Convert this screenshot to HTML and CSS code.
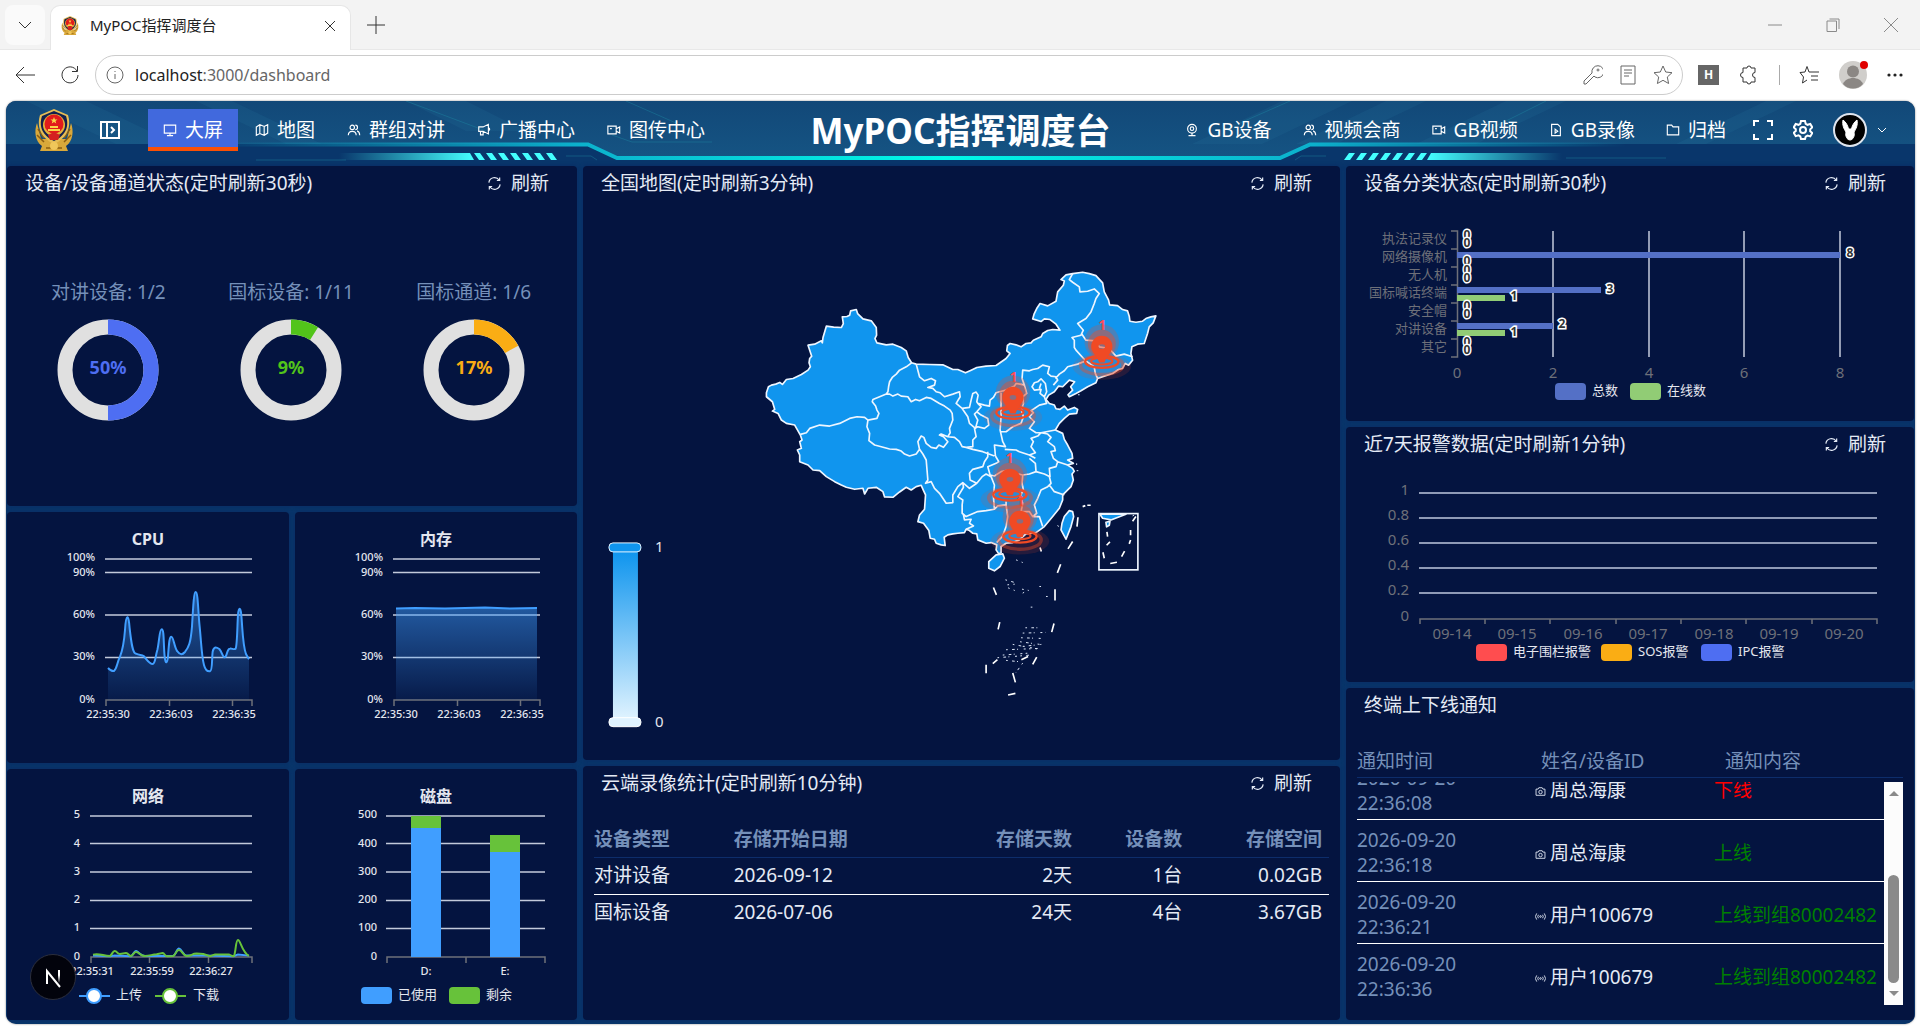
FILE: index.html
```html
<!DOCTYPE html>
<html lang="zh-CN">
<head>
<meta charset="utf-8">
<title>MyPOC指挥调度台</title>
<link rel="stylesheet" href="styles.css">
</head>
<body>
<svg class="defs" width="0" height="0" aria-hidden="true">
  <defs>
    <symbol id="emblem" viewBox="0 0 40 44">
      <path d="M3 14C0 22 1 32 8 37L6 42H34L32 37C39 32 40 22 37 14L33 30H7Z" fill="#d9a83a"/>
      <path d="M4 20l6 9M3 26l7 7M36 20l-6 9M37 26l-7 7M12 39h16" stroke="#8a5d12" stroke-width="1.5" fill="none"/>
      <path d="M20 0L34 6C37 16 35 28 20 35C5 28 3 16 6 6Z" fill="#e6bd55"/>
      <path d="M20 2L32 7C35 16 33 26 20 32C7 26 5 16 8 7Z" fill="#12204d"/>
      <circle cx="20" cy="16" r="11" fill="#e3b23c"/><circle cx="20" cy="15" r="9.500" fill="#e21b1b"/>
      <path d="M20 8l1 2.500h2.500l-2 1.500.8 2.500-2.300-1.500-2.300 1.500.8-2.500-2-1.500H19zM14 20h12v2H14zM16 17h8v2h-8z" fill="#f8d648"/>
      <path d="M14 26l6-3 6 3-2 5h-8z" fill="#d42020"/>
      <circle cx="20" cy="37" r="4" fill="#f0c75a"/>
    </symbol>
    <symbol id="i-sync" viewBox="0 0 16 16"><path d="M2 7a6 6 0 0 1 11-2.500M14 9a6 6 0 0 1-11 2.500M13.500 1.500v3.300h-3M2.500 14.500v-3.300h3"/></symbol>
    <symbol id="i-screen" viewBox="0 0 16 16"><path d="M1.500 2.500h13v9h-13zM8 11.500v3M4.500 14.500h7"/></symbol>
    <symbol id="i-map" viewBox="0 0 16 16"><path d="M1.500 4.500l4-2.500 5 2 4-2v9.500l-4 2.500-5-2-4 2zM5.500 2v10M10.500 4v10"/></symbol>
    <symbol id="i-team" viewBox="0 0 16 16"><circle cx="6" cy="5" r="2.500"/><path d="M1.500 14c0-6 9-6 9 0M9.500 2.500a2.500 2.500 0 0 1 0 5M11.500 9c2 .7 3 2.500 3 5"/></symbol>
    <symbol id="i-horn" viewBox="0 0 16 16"><path d="M2 4.500h5l6-3v11l-6-3H2zM4 9.500v4h3v-4M13 5.500c2 .5 2 2.500 0 3"/></symbol>
    <symbol id="i-video" viewBox="0 0 16 16"><path d="M1 3.500h9.500v9H1zM10.500 6.500l4-2v7l-4-2M3.500 6.500h2"/></symbol>
    <symbol id="i-webcam" viewBox="0 0 16 16"><circle cx="8" cy="6.500" r="5"/><circle cx="8" cy="6.500" r="2"/><path d="M8 11.500v3M4 14.500h8"/></symbol>
    <symbol id="i-file" viewBox="0 0 16 16"><path d="M3 1.500h7l3 3v10H3zM7 7v4.500l3-2.200z"/></symbol>
    <symbol id="i-folder" viewBox="0 0 16 16"><path d="M1.500 2.500h5l1.500 2h6.500v9h-13z"/></symbol>
    <symbol id="i-camera" viewBox="0 0 16 16"><path d="M1.500 4.500h3l1-2h5l1 2h3v9h-13z"/><circle cx="8" cy="8.800" r="2.500"/></symbol>
    <symbol id="i-signal" viewBox="0 0 16 16"><circle cx="8" cy="8" r="1.200"/><path d="M5 5.500a4 4 0 0 0 0 5M11 5.500a4 4 0 0 1 0 5M2.500 3.500a7 7 0 0 0 0 9M13.500 3.500a7 7 0 0 1 0 9"/></symbol>
    <linearGradient id="area" x1="0" y1="0" x2="0" y2="1"><stop offset="0" stop-color="#409eff" stop-opacity=".5"/><stop offset="1" stop-color="#409eff" stop-opacity=".05"/></linearGradient>
    <linearGradient id="heat" x1="0" y1="0" x2="0" y2="1"><stop offset="0" stop-color="#0f95ee"/><stop offset="1" stop-color="#e0f3ff"/></linearGradient>
    <symbol id="pin" viewBox="-100 -100 200 210" overflow="visible">
      <ellipse cx="0" cy="60" rx="88" ry="40" fill="#f04a24" opacity=".14"/>
      <ellipse cx="0" cy="56" rx="64" ry="28" fill="none" stroke="#f04a24" stroke-width="10" opacity=".4"/>
      <circle cx="0" cy="-14" r="52" fill="#f04a24" opacity=".25"/>
      <circle cx="0" cy="-8" r="42" fill="#f04a24" opacity=".4"/>
      <ellipse cx="0" cy="46" rx="50" ry="18" fill="none" stroke="#f04a24" stroke-width="7"/>
      <ellipse cx="0" cy="44" rx="32" ry="10" fill="none" stroke="#f04a24" stroke-width="6"/>
      <path fill-rule="evenodd" fill="#f04a24" d="M-32 0A32 32 0 0 1 32 0C32 18 14 28 8 48H-8C-14 28-32 18-32 0ZM-10 0A10 7 0 1 0 10 0A10 7 0 1 0-10 0Z"/>
    </symbol>
  </defs>
</svg>

<div class="browser">
  <div class="tabstrip">
    <button class="tab-search" aria-label="标签页"><svg width="16" height="16" viewBox="0 0 16 16"><path d="M2 5l6 6 6-6"/></svg></button>
    <div class="tab">
      <svg class="favicon" width="18" height="20"><use href="#emblem"/></svg>
      <span class="tab-title">MyPOC指挥调度台</span>
      <button aria-label="关闭"><svg width="12" height="12" viewBox="0 0 12 12"><path d="M1 1l10 10M11 1L1 11"/></svg></button>
    </div>
    <button class="new-tab" aria-label="新建标签页"><svg width="18" height="18" viewBox="0 0 18 18"><path d="M9 0v18M0 9h18"/></svg></button>
    <div class="window-controls">
      <button aria-label="最小化"><svg width="14" height="14" viewBox="0 0 14 14"><path d="M0 7h14"/></svg></button>
      <button aria-label="还原"><svg width="14" height="14" viewBox="0 0 14 14"><path d="M1 3h9.500v10.500H1zM3.500 1H13v10"/></svg></button>
      <button aria-label="关闭窗口"><svg width="14" height="14" viewBox="0 0 14 14"><path d="M0 0l14 14M14 0L0 14"/></svg></button>
    </div>
  </div>
  <div class="toolbar">
    <button aria-label="返回"><svg width="20" height="18" viewBox="0 0 20 18"><path d="M20 9H1M9 1L1 9l8 8"/></svg></button>
    <button aria-label="刷新页面"><svg width="20" height="20" viewBox="0 0 20 20"><path d="M17 6a8 8 0 1 0 1 4M17.500 1v5.500H12"/></svg></button>
    <div class="address">
      <svg width="18" height="18" viewBox="0 0 18 18"><circle cx="9" cy="9" r="8"/><path d="M9 8v5M9 5v1"/></svg>
      <a href="#" class="url">localhost<span>:3000/dashboard</span></a>
      <svg width="20" height="20" viewBox="0 0 20 20"><path d="M11 11l-8 8H1v-3l8-8a6 6 0 1 1 3 4z"/><circle cx="15" cy="5" r="1"/></svg>
      <svg width="16" height="20" viewBox="0 0 16 20"><path d="M1 1h14v18H1zM4 5h8M4 8h8M4 11h5"/></svg>
      <svg width="20" height="20" viewBox="0 0 20 20"><path d="M10 1l2.700 6 6.300.7-4.700 4.300 1.300 6.500L10 15.300 4.400 18.500 5.700 12 1 7.700 7.300 7z"/></svg>
    </div>
    <div class="extensions">
      <span class="ext-h">H</span>
      <svg width="20" height="20" viewBox="0 0 20 20"><path d="M4 3h4a2 2 0 0 1 4 0h4v4.500a2.200 2.200 0 0 0 0 5V17h-4a2 2 0 0 1-4 0H4v-4.500a2.500 2.500 0 0 1 0-5z"/></svg>
      <i class="divider"></i>
      <svg width="20" height="20" viewBox="0 0 20 20"><path d="M12 7H10L8 1.500 6 7 1 7.500 4.500 12 3.500 18 8 15M12 7h8M12 11h7M12 15h7"/></svg>
      <span class="profile"><svg width="28" height="28" viewBox="0 0 28 28"><circle cx="14" cy="14" r="14" fill="#d0cecb" stroke="none"/><circle cx="14" cy="10.500" r="6" fill="#8b8784" stroke="none"/><path d="M4 23c3-8 17-8 20 0-5 6-15 6-20 0z" fill="#8b8784" stroke="none"/></svg></span>
      <svg class="dots" width="16" height="4" viewBox="0 0 16 4"><circle cx="2" cy="2" r="1.600"/><circle cx="8" cy="2" r="1.600"/><circle cx="14" cy="2" r="1.600"/></svg>
    </div>
  </div>
</div>

<div class="app">
  <header class="header">
    <svg class="header-bg" viewBox="0 0 1909 65" preserveAspectRatio="none" aria-hidden="true">
      <defs>
        <linearGradient id="sky" x1="0" y1="0" x2="0" y2="1"><stop offset="0" stop-color="#124878"/><stop offset="1" stop-color="#155483"/></linearGradient>
        <linearGradient id="edge" gradientUnits="userSpaceOnUse" x1="200" y1="0" x2="1620" y2="0"><stop offset="0" stop-color="#0cb0cc" stop-opacity="0"/><stop offset=".26" stop-color="#0cb0cc"/><stop offset=".52" stop-color="#00fae8"/><stop offset=".78" stop-color="#0cb0cc"/><stop offset="1" stop-color="#0cb0cc" stop-opacity="0"/></linearGradient>
        <linearGradient id="tailL"><stop offset="0" stop-color="#4ff" stop-opacity="0"/><stop offset="1" stop-color="#4ff"/></linearGradient>
        <linearGradient id="tailR"><stop offset="0" stop-color="#4ff"/><stop offset="1" stop-color="#4ff" stop-opacity="0"/></linearGradient>
      </defs>
      <path fill="url(#sky)" d="M0 0H1909V43H1304L1274 57H611L582 43H0Z"/>
      <path fill="#2f86a8" opacity=".13" d="M20 0h60l90 43h-60zM190 0h36l90 43h-36zM400 0h60l60 30h-60zM1276 0h70l-90 43h-70zM1380 0h40l-90 43h-40zM1500 0h60l-90 43h-60zM1760 0h30l-90 43h-30z"/>
      <path fill="none" stroke="#1e8ba5" opacity=".4" d="M400 0l80 30M620 0l50 22M606 34l20 7h80M1284 0l-50 22M1540 0l-60 30M250 59h90M560 55h25l6 4M1320 55h-25l-6 4M1560 57h100"/>
      <path fill="none" stroke="url(#edge)" stroke-width="4" d="M200 43.500H582L611 57H1274L1304 43.500H1620"/>
      <path fill="url(#tailL)" d="M333 52H464L468 59H333Z"/>
      <path fill="url(#tailR)" d="M1425 52H1556V59H1421Z"/>
      <path fill="#4ff" d="M468 52h6l5 7h-6zM480 52h6l5 7h-6zM492 52h6l5 7h-6zM504 52h6l5 7h-6zM516 52h6l5 7h-6zM528 52h6l5 7h-6zM540 52h6l5 7h-6zM1343 52h6l-5 7h-6zM1355 52h6l-5 7h-6zM1367 52h6l-5 7h-6zM1379 52h6l-5 7h-6zM1391 52h6l-5 7h-6zM1403 52h6l-5 7h-6zM1415 52h6l-5 7h-6z"/>
    </svg>
    <div class="header-side">
      <svg class="logo" width="40" height="44"><use href="#emblem"/></svg>
      <button class="icon-btn" aria-label="展开侧栏"><svg width="20" height="20" viewBox="0 0 20 20"><path d="M1 2h18v16H1zM7 2v16M11 7l3 3-3 3"/></svg></button>
      <nav class="nav">
        <a href="#" class="active"><svg><use href="#i-screen"/></svg>大屏</a>
        <a href="#"><svg><use href="#i-map"/></svg>地图</a>
        <a href="#"><svg><use href="#i-team"/></svg>群组对讲</a>
        <a href="#"><svg><use href="#i-horn"/></svg>广播中心</a>
        <a href="#"><svg><use href="#i-video"/></svg>图传中心</a>
      </nav>
    </div>
    <h1>MyPOC指挥调度台</h1>
    <div class="header-side header-right">
      <nav class="nav">
        <a href="#"><svg><use href="#i-webcam"/></svg>GB设备</a>
        <a href="#"><svg><use href="#i-team"/></svg>视频会商</a>
        <a href="#"><svg><use href="#i-video"/></svg>GB视频</a>
        <a href="#"><svg><use href="#i-file"/></svg>GB录像</a>
        <a href="#"><svg><use href="#i-folder"/></svg>归档</a>
      </nav>
      <button class="icon-btn" aria-label="全屏"><svg width="20" height="20" viewBox="0 0 20 20"><path d="M1 6V1h5M14 1h5v5M19 14v5h-5M6 19H1v-5"/></svg></button>
      <button class="icon-btn" aria-label="设置"><svg width="20" height="20" viewBox="0 0 20 20"><path d="M8 1h4l.7 2.800 1.800 1L17.300 4l2 3.400L17.200 9.400v1.800l2.100 1.800-2 3.400-2.800-.8-1.800 1L12 19H8l-.7-2.600-1.800-1-2.800.8-2-3.400 2.100-1.800V9.200L.7 7.400l2-3.400 2.800.8 1.800-1z"/><circle cx="10" cy="10" r="3"/></svg></button>
      <button class="user" aria-label="用户菜单"><svg width="34" height="34" viewBox="0 0 34 34"><circle cx="17" cy="17" r="16" fill="#000" stroke="#dfe5ee" stroke-width="2"/><path d="M10 7c3 2 5 6 5.500 9h3C19 13 21 9 24 7c1 5-1 9-3 12 1 4-1 8-4 8s-5-4-4-8c-2-3-4-7-3-12z" fill="#fff"/></svg><svg class="caret" width="10" height="8" viewBox="0 0 10 8"><path d="M1 2l4 4 4-4"/></svg></button>
    </div>
  </header>

  <main class="dashboard">
    <div class="column column-left">
      <section class="panel">
        <div class="panel-head"><h2>设备/设备通道状态(定时刷新30秒)</h2><button class="refresh"><svg><use href="#i-sync"/></svg>刷新</button></div>
        <div class="gauges">
          <figure><figcaption>对讲设备: 1/2</figcaption>
            <svg width="102" height="102" viewBox="-51 -51 102 102"><circle r="43" fill="none" stroke="#e0e0e0" stroke-width="15"/><circle r="43" fill="none" stroke="#4e6ef2" stroke-width="15" pathLength="100" stroke-dasharray="50 100" transform="rotate(-90)"/><text y="4" fill="#4e6ef2">50%</text></svg></figure>
          <figure><figcaption>国标设备: 1/11</figcaption>
            <svg width="102" height="102" viewBox="-51 -51 102 102"><circle r="43" fill="none" stroke="#e0e0e0" stroke-width="15"/><circle r="43" fill="none" stroke="#52c41a" stroke-width="15" pathLength="100" stroke-dasharray="9 100" transform="rotate(-90)"/><text y="4" fill="#52c41a">9%</text></svg></figure>
          <figure><figcaption>国标通道: 1/6</figcaption>
            <svg width="102" height="102" viewBox="-51 -51 102 102"><circle r="43" fill="none" stroke="#e0e0e0" stroke-width="15"/><circle r="43" fill="none" stroke="#faad14" stroke-width="15" pathLength="100" stroke-dasharray="17 100" transform="rotate(-90)"/><text y="4" fill="#faad14">17%</text></svg></figure>
        </div>
      </section>
      <div class="monitors">
        <section class="panel">
          <svg class="chart" viewBox="0 0 282 251">
            <text class="title" x="141" y="33">CPU</text>
            <path class="grid" d="M98 47H245M98 60.500H245M98 103H245M98 145.500H245"/>
            <path class="axis" d="M99 194V188H245V194M162.500 188V194M225.500 188V194"/>
            <g class="ylab"><text x="88" y="49">100%</text><text x="88" y="64">90%</text><text x="88" y="106">60%</text><text x="88" y="148">30%</text><text x="88" y="191">0%</text></g>
            <g class="xlab"><text x="101" y="206">22:35:30</text><text x="164" y="206">22:36:03</text><text x="227" y="206">22:36:35</text></g>
            <g transform="translate(-7 -2) scale(.3333)">
              <path fill="url(#area)" d="M324 474C330 480 335 485 342 483C352 475 350 460 360 440C366 425 372 400 375 360C378 310 386 310 389 355C394 400 398 430 408 431C418 436 425 434 431 438C440 448 448 462 458 462C466 462 466 440 472 420C478 395 478 358 485 358C493 358 490 400 494 440C497 465 502 460 504 440C507 400 508 380 514 380C521 380 522 410 532 424C540 436 548 434 555 426C566 412 572 400 576 350C580 280 582 246 587 246C594 246 594 300 599 350C604 400 605 440 612 465C616 480 622 485 630 484C638 482 635 450 638 425C642 408 650 412 658 417C666 425 668 442 674 442C682 440 680 416 690 416C696 415 702 420 707 416C712 405 712 340 714 315C716 290 722 290 724 315C728 360 728 405 738 432L747 448V570H324Z"/>
              <path class="curve" d="M324 474C330 480 335 485 342 483C352 475 350 460 360 440C366 425 372 400 375 360C378 310 386 310 389 355C394 400 398 430 408 431C418 436 425 434 431 438C440 448 448 462 458 462C466 462 466 440 472 420C478 395 478 358 485 358C493 358 490 400 494 440C497 465 502 460 504 440C507 400 508 380 514 380C521 380 522 410 532 424C540 436 548 434 555 426C566 412 572 400 576 350C580 280 582 246 587 246C594 246 594 300 599 350C604 400 605 440 612 465C616 480 622 485 630 484C638 482 635 450 638 425C642 408 650 412 658 417C666 425 668 442 674 442C682 440 680 416 690 416C696 415 702 420 707 416C712 405 712 340 714 315C716 290 722 290 724 315C728 360 728 405 738 432L747 448"/>
            </g>
          </svg>
        </section>
        <section class="panel">
          <svg class="chart" viewBox="0 0 282 251">
            <text class="title" x="141" y="33">内存</text>
            <path class="grid" d="M98 47H245M98 60.500H245M98 103H245M98 145.500H245"/>
            <path class="axis" d="M99 194V188H245V194M162.500 188V194M225.500 188V194"/>
            <g class="ylab"><text x="88" y="49">100%</text><text x="88" y="64">90%</text><text x="88" y="106">60%</text><text x="88" y="148">30%</text><text x="88" y="191">0%</text></g>
            <g class="xlab"><text x="101" y="206">22:35:30</text><text x="164" y="206">22:36:03</text><text x="227" y="206">22:36:35</text></g>
            <path fill="url(#area)" d="M101 96H242V188H101Z"/>
            <path fill="none" stroke="#409eff" stroke-width="2" d="M101 96.500L120 96L150 96.500L190 95.500L215 96.500L242 96"/>
          </svg>
        </section>
        <section class="panel">
          <svg class="chart" viewBox="0 0 282 251">
            <text class="title" x="141" y="33">网络</text>
            <path class="grid" d="M83 47H245M83 74.500H245M83 103H245M83 131.500H245M83 159.500H245"/>
            <path class="axis" d="M84 194V188H245V194M142.500 188V194M201.500 188V194"/>
            <g class="ylab"><text x="73" y="49">5</text><text x="73" y="78">4</text><text x="73" y="106">3</text><text x="73" y="134">2</text><text x="73" y="162">1</text><text x="73" y="191">0</text></g>
            <g class="xlab"><text x="85" y="206">22:35:31</text><text x="145" y="206">22:35:59</text><text x="204" y="206">22:36:27</text></g>
            <g transform="translate(-7 -259) scale(.3333)">
              <path class="curve" d="M279 1337L330 1339L344 1337L393 1339C400 1335 402 1324 408 1323C418 1326 420 1338 435 1338L520 1338C528 1334 530 1316 537 1316C546 1316 548 1336 560 1337L610 1337L700 1339L714 1334L747 1337"/>
              <path class="curve green" d="M279 1334C300 1330 310 1338 330 1338C336 1335 338 1323 344 1323C352 1323 352 1333 360 1332L378 1329C385 1330 388 1338 393 1338C400 1335 402 1326 408 1326C418 1326 420 1338 435 1338C450 1338 455 1334 470 1333L488 1329C494 1330 494 1339 502 1339L520 1338C528 1334 528 1320 537 1320C546 1320 548 1336 560 1338C575 1338 575 1331 590 1331L610 1332L630 1339L645 1334L688 1334C695 1336 697 1340 702 1338C708 1325 707 1290 714 1290C722 1290 725 1325 747 1338"/>
            </g>
            <path d="M72 227H103" stroke="#409eff" stroke-width="2"/><circle cx="87" cy="227" r="7" fill="#fff" stroke="#409eff" stroke-width="2"/>
            <path d="M148 227H179" stroke="#67c23a" stroke-width="2"/><circle cx="163" cy="227" r="7" fill="#fff" stroke="#67c23a" stroke-width="2"/>
            <g class="legend"><text x="109" y="230">上传</text><text x="186" y="230">下载</text></g>
          </svg>
        </section>
        <section class="panel">
          <svg class="chart" viewBox="0 0 282 251">
            <text class="title" x="141" y="33">磁盘</text>
            <path class="grid" d="M91 47H250M91 74.500H250M91 103H250M91 131.500H250M91 159.500H250"/>
            <path class="axis" d="M92 194V188H250V194M171 188V194"/>
            <g class="ylab"><text x="82" y="49">500</text><text x="82" y="78">400</text><text x="82" y="106">300</text><text x="82" y="134">200</text><text x="82" y="162">100</text><text x="82" y="191">0</text></g>
            <g class="xlab"><text x="131" y="206">D:</text><text x="210" y="206">E:</text></g>
            <path fill="#409eff" d="M116 59h30v129h-30zM195 83h30v105h-30z"/><path fill="#67c23a" d="M116 47h30v12h-30zM195 66h30v17h-30z"/>
            <rect x="66" y="218" width="31" height="17" rx="4" fill="#409eff"/><rect x="154" y="218" width="31" height="17" rx="4" fill="#67c23a"/>
            <g class="legend"><text x="103" y="230">已使用</text><text x="191" y="230">剩余</text></g>
          </svg>
        </section>
      </div>
    </div>

    <div class="column column-mid">
      <section class="panel">
        <div class="panel-head"><h2>全国地图(定时刷新3分钟)</h2><button class="refresh"><svg><use href="#i-sync"/></svg>刷新</button></div>
        <svg class="chart map" viewBox="0 34 758 560">
          <g transform="translate(157 84) scale(.3333)">
            <g fill="#1095ee" stroke="#eef6ff" stroke-width="5" stroke-linejoin="round">
              <path d="M80 428L86 410 95 405 108 402 120 397 128 403 140 388 160 385 185 373 205 360 212 350 208 338 210 325 216 318 210 300 205 285 225 282 245 272 248 278 250 262 260 228 282 231 305 232 311 220 308 200 322 199 330 195 333 182 350 178 354 190 370 206 395 212 410 232 411 255 406 265 412 278 440 284 460 282 485 292 500 302 506 322 516 338 530 342 570 343 610 344 640 358 655 358 678 368 695 360 712 352 740 348 770 346 800 325 812 310 802 302 804 286 812 280 830 284 845 290 860 280 875 278 882 270 905 260 910 250 925 241 940 238 962 240 950 222 932 208 915 206 905 214 880 206 884 192 892 175 902 160 925 167 950 153 955 125 972 105 975 92 965 88 980 74 1000 70 1030 66 1050 70 1070 76 1090 98 1095 125 1108 150 1111 164 1135 166 1150 178 1165 182 1170 198 1172 213 1190 216 1210 213 1222 204 1235 200 1250 197 1242 218 1230 230 1225 250 1215 280 1195 282 1178 290 1175 310 1180 330 1168 345 1158 340 1150 355 1138 358 1120 370 1095 378 1075 385 1070 398 1045 410 1025 422 1010 430 990 440 986 434 1000 420 994 410 1006 395 990 390 970 410 958 408 945 425 928 435 920 448 930 460 945 465 950 476 962 478 975 468 985 480 1005 472 1015 478 1012 490 990 492 975 505 960 520 948 540 970 550 975 568 985 585 998 610 1000 625 985 630 1002 640 985 645 1000 655 1005 664 998 672 1002 690 995 710 980 725 970 735 970 750 960 775 940 800 915 830 890 848 860 852 840 870 820 878 800 880 785 890 785 908 778 912 770 900 772 885 755 878 740 880 715 870 712 852 700 850 690 842 680 838 675 848 655 850 640 852 625 855 614 862 617 887 605 885 590 880 585 868 572 865 568 842 552 820 535 815 540 795 555 778 558 735 552 722 545 706 530 710 515 720 500 712 480 726 460 742 435 741 430 725 410 712 385 715 375 732 370 715 345 718 320 712 305 705 285 695 260 680 240 662 220 660 205 645 180 635 180 615 173 600 185 595 180 575 187 570 182 555 165 525 140 520 125 510 115 490 98 483 105 478 98 455 80 440Z"/>
              <path d="M770 915L790 912 795 925 782 950 765 963 748 955 748 935ZM1000 785L1003 800 995 830 980 868 965 840 968 820 975 800 990 782ZM1082 793H1160L1115 810 1090 805ZM1100 817l12-3-2 12-8 5z"/>
              <path fill="none" d="M516 338L500 350 480 360 470 372 458 382 450 395 447 410 445 425 440 432 420 440 400 448 398 455 408 468 412 480 418 490 412 505 385 510 375 502 352 500 330 505 300 520 270 528 240 525 210 535 200 548 182 553M385 510L382 530 390 550 388 572 405 585 425 590 450 597 470 598 485 603 495 612 510 618 530 612 540 598 535 575 545 558 553 562 560 580 575 592 590 595 598 585 612 592 625 575 612 560 600 555 605 552 625 560 632 548 630 535 640 510 638 490 632 480 615 468 600 460 575 445 560 442 540 452 528 448 515 455 505 440 485 438 475 432 460 438 450 432 440 432M530 342L540 380 555 392 575 385 588 392 585 405 565 412 580 415 590 425 602 428 615 440 640 432 660 425 662 440 650 460 668 475 690 472 695 450 700 430 710 426 716 435 712 455 715 460 725 470 712 485 705 492 715 510 708 535 690 520 685 500 668 475M715 460L735 465 750 468 752 450 762 442 770 428 780 425 800 420 810 415 825 408 830 400 842 402 855 405 848 385 850 360 870 362 880 358 895 355 910 345 930 350 925 370 935 378 950 380 955 390 942 405M948 385L960 372 975 362 985 350 1015 342 1040 332 1030 322 1010 300 1005 292 1005 270 998 262 1025 255 1032 240 1015 220 1040 205 1055 185 1065 160 1070 145 1080 130 1065 116 1045 123 1022 125 1020 110 1000 96 990 88 1000 70M1028 252L1040 270 1070 272 1080 290 1110 295 1130 318 1155 312 1180 320M1040 332L1065 350 1068 370 1075 385M625 560L645 562 660 575 668 590 680 592 700 590 700 570 710 560 705 535 715 530 735 535 748 525 745 505 725 495 712 485M680 592L700 598 730 605 765 618M785 428L785 500 782 540 790 575 798 590 765 585 768 618M855 405L862 430 850 440 852 460 846 480 852 500 845 520 820 530 800 545 782 545M796 598L830 600 840 605 870 615 888 625M870 615L888 608 875 590 882 575 875 565 895 558 905 548 890 548 870 535 885 515 870 500 882 488 875 482 900 465 922 460 915 440M878 410L885 398 895 395 905 386 918 400 922 425 915 440 902 430 905 418 885 420ZM905 400L900 415M768 618L778 635 770 640 745 650 752 675 765 678 785 665 800 662 820 668 850 675 870 672 890 665 888 640 870 625M905 548L925 552 935 562 925 575 945 590 948 602 935 605 942 625 955 635 950 650 930 655 932 680 915 672 890 665M905 548L948 540M955 635L985 645M745 605L745 620 735 635 730 650 700 658 690 670 692 690 712 700 728 680 740 672 755 680M540 598L550 612 560 630 565 690 558 700 575 695 585 715 600 730 620 760 640 758 640 735 655 710 670 698 690 715 712 700M670 698L672 712 655 740 670 750 668 765 668 790 680 800 715 785 740 782 765 778 775 768 800 765 800 755M765 778L762 740 765 705 755 680M672 795L675 810 695 808 690 820 702 828 680 838M800 765L805 800 800 830 790 858 772 878M850 675L848 700 852 720 842 740 850 760 845 785 870 785 880 800 892 790 885 765 895 745 905 720 925 710 935 700 930 680M930 705L945 725 975 735M880 800L900 800 910 830"/>
            </g>
            <rect x="1079" y="791" width="117" height="169" fill="none" stroke="#eef6ff" stroke-width="5"/>
            <path fill="none" stroke="#fff" stroke-width="5" d="M1016 802l-3 28M1000 875l-14 22M964 943l-10 26M947 1018v34M944 1121l-7 26M892 1222l-12 22M740 1245v26M781 1117l-5 22M762 1013l9 22M902 893l4 12M1103 846l2 14M1112 876l-10 10M1091 907l4 18M1113 941l20-4M1156 904l-9 16M1174 870l-4 12M1174 840v16M1190 800l-10 14M760 1242l14-12M846 1230l20-10M806 1336l22-5M1030 770l8-3M1044 766h10M820 1270l8 28"/>
            <path fill="none" stroke="#dfe8f8" stroke-width="3" stroke-dasharray="5 13 8 7 3 17 6 10" d="M798 990l28 8M804 1005l22-2M806 1014l20 8M848 1018l20 4M850 1030l16-10M900 1010h8M920 1040h6M874 1072h6M830 930l20 8M858 1134l50 0M850 1150l70-2M845 1164l60 2M842 1176l60 8M850 1190l56-6M820 1184l76 14M800 1200l100-4M790 1216l80-6M774 1224l100-8M800 1232l40 4M850 1240l-20 28M955 826l6 10M1012 640v12M1012 662h8M1016 434h14M1180 798l8-4"/>
          </g>
          <g class="count"><text x="520" y="164">1</text><text x="431" y="216">1</text><text x="427" y="297">1</text><text x="438" y="340">1</text></g>
          <g>
            <use href="#pin" x="486" y="147" width="67" height="70"/><use href="#pin" x="397" y="198" width="67" height="70"/><use href="#pin" x="394" y="280" width="67" height="70"/><use href="#pin" x="404" y="322" width="67" height="70"/>
          </g>
          <rect x="30" y="386" width="25" height="168" fill="url(#heat)"/>
          <rect x="26" y="377" width="32" height="9" rx="4" fill="#1095ee" stroke="#e8f5ff"/>
          <rect x="26" y="552" width="32" height="9" rx="4" fill="#e0f3ff" stroke="#fff"/>
          <g class="scale"><text x="72" y="386">1</text><text x="72" y="561">0</text></g>
        </svg>
      </section>
      <section class="panel">
        <div class="panel-head"><h2>云端录像统计(定时刷新10分钟)</h2><button class="refresh"><svg><use href="#i-sync"/></svg>刷新</button></div>
        <table class="storage">
          <thead><tr><th>设备类型</th><th>存储开始日期</th><th class="num">存储天数</th><th class="num">设备数</th><th class="num">存储空间</th></tr></thead>
          <tbody>
            <tr><td>对讲设备</td><td>2026-09-12</td><td class="num">2天</td><td class="num">1台</td><td class="num">0.02GB</td></tr>
            <tr><td>国标设备</td><td>2026-07-06</td><td class="num">24天</td><td class="num">4台</td><td class="num">3.67GB</td></tr>
          </tbody>
        </table>
      </section>
    </div>

    <div class="column column-right">
      <section class="panel">
        <div class="panel-head"><h2>设备分类状态(定时刷新30秒)</h2><button class="refresh"><svg><use href="#i-sync"/></svg>刷新</button></div>
        <svg class="chart" viewBox="0 34 568 221">
          <path class="grid" d="M207 65V191M303 65V191M398 65V191M494 65V191"/>
          <path class="axis" d="M105 65H111.500V191H105M105 83H111M105 101H111M105 119H111M105 137H111M105 155H111M105 173H111"/>
          <g class="cat"><text x="101" y="77">执法记录仪</text><text x="101" y="95">网络摄像机</text><text x="101" y="113">无人机</text><text x="101" y="131">国标喊话终端</text><text x="101" y="149">安全帽</text><text x="101" y="167">对讲设备</text><text x="101" y="185">其它</text></g>
          <path fill="#5470c6" d="M111 86H494v6H111zM111 121H255v6H111zM111 157H207v6H111z"/><path fill="#91cc75" d="M111 129h48v6h-48zM111 164h48v6h-48z"/>
          <g class="val"><text x="121" y="73">0</text><text x="121" y="81">0</text><text x="504" y="91">8</text><text x="121" y="99">0</text><text x="121" y="108">0</text><text x="121" y="116">0</text><text x="264" y="127">3</text><text x="168" y="134">1</text><text x="121" y="144">0</text><text x="121" y="152">0</text><text x="216" y="162">2</text><text x="168" y="170">1</text><text x="121" y="180">0</text><text x="121" y="188">0</text></g>
          <g class="dim"><text x="111" y="212">0</text><text x="207" y="212">2</text><text x="303" y="212">4</text><text x="398" y="212">6</text><text x="494" y="212">8</text></g>
          <rect x="209" y="217" width="31" height="17" rx="4" fill="#5470c6"/><rect x="284" y="217" width="31" height="17" rx="4" fill="#91cc75"/>
          <g class="legend"><text x="246" y="229">总数</text><text x="321" y="229">在线数</text></g>
        </svg>
      </section>
      <section class="panel">
        <div class="panel-head"><h2>近7天报警数据(定时刷新1分钟)</h2><button class="refresh"><svg><use href="#i-sync"/></svg>刷新</button></div>
        <svg class="chart" viewBox="0 34 568 221">
          <path class="grid dull" d="M73 66H531M73 91H531M73 116H531M73 141H531M73 166H531"/>
          <path class="axis" d="M74 197V192H531V197M139 192V197M204 192V197M270 192V197M335 192V197M400 192V197M466 192V197"/>
          <g class="dim end"><text x="63" y="68">1</text><text x="63" y="93">0.8</text><text x="63" y="118">0.6</text><text x="63" y="143">0.4</text><text x="63" y="168">0.2</text><text x="63" y="194">0</text></g>
          <g class="dim"><text x="106" y="212">09-14</text><text x="171" y="212">09-15</text><text x="237" y="212">09-16</text><text x="302" y="212">09-17</text><text x="368" y="212">09-18</text><text x="433" y="212">09-19</text><text x="498" y="212">09-20</text></g>
          <rect x="130" y="217" width="31" height="17" rx="4" fill="#ff4d4f"/><rect x="255" y="217" width="31" height="17" rx="4" fill="#faad14"/><rect x="355" y="217" width="31" height="17" rx="4" fill="#4e6ef2"/>
          <g class="legend"><text x="167" y="229">电子围栏报警</text><text x="292" y="229">SOS报警</text><text x="392" y="229">IPC报警</text></g>
        </svg>
      </section>
      <section class="panel">
        <div class="panel-head"><h2>终端上下线通知</h2></div>
        <div class="notices">
          <table class="notice-head"><thead><tr><th>通知时间</th><th>姓名/设备ID</th><th>通知内容</th></tr></thead></table>
          <div class="notice-scroll">
            <div class="notice-view">
              <table class="notice-body"><tbody>
                <tr><td>2026-09-20<br>22:36:08</td><td><svg><use href="#i-camera"/></svg>周总海康</td><td class="off">下线</td></tr>
                <tr><td>2026-09-20<br>22:36:18</td><td><svg><use href="#i-camera"/></svg>周总海康</td><td class="on">上线</td></tr>
                <tr><td>2026-09-20<br>22:36:21</td><td><svg><use href="#i-signal"/></svg>用户100679</td><td class="on">上线到组80002482</td></tr>
                <tr><td>2026-09-20<br>22:36:36</td><td><svg><use href="#i-signal"/></svg>用户100679</td><td class="on">上线到组80002482</td></tr>
              </tbody></table>
            </div>
            <div class="scrollbar"><i class="up"></i><i class="thumb"></i><i class="down"></i></div>
          </div>
        </div>
      </section>
    </div>
  </main>
</div>
<button class="dev-badge" aria-label="开发工具"><svg width="44" height="44" viewBox="0 0 44 44"><defs><linearGradient id="fade" x1="0" y1="0" x2="0" y2="1"><stop offset=".4" stop-color="#fff"/><stop offset="1" stop-color="#fff" stop-opacity="0"/></linearGradient></defs><path d="M16 29V16L29 32" fill="none" stroke="#fff" stroke-width="2"/><path d="M27 15h2v13h-2z" fill="url(#fade)"/></svg></button>
</body>
</html>
```
FILE: styles.css
```css
* { box-sizing: border-box; }
body {
  margin: 0;
  min-height: 100vh;
  display: flex;
  flex-direction: column;
  background: #fff;
  font-family: "Noto Sans", "Noto Sans CJK SC", sans-serif;
  font-size: 19px;
  line-height: 25px;
  color: #e4eaf5;
}
button { padding: 0; border: 0; background: none; font: inherit; color: inherit; display: flex; align-items: center; justify-content: center; }
a { color: inherit; text-decoration: none; }
svg { flex: none; }
h1, h2, figure { margin: 0; }
.defs { position: absolute; }

/* Browser frame */
.browser { height: 101px; color: #222; }
.browser svg { fill: none; stroke: #333; stroke-width: 1; }
.tabstrip { height: 50px; display: flex; align-items: center; background: #f3f3f3; border-bottom: 1px solid #e8e8e8; }
.tab-search { width: 40px; height: 40px; margin-left: 5px; border-radius: 8px; background: #fafafa; }
.tab { align-self: flex-end; display: flex; align-items: center; width: 301px; height: 45px; margin: 0 0 -1px 5px; padding: 0 14px 5px 10px; border: 1px solid #e6e6e6; border-bottom: 0; border-radius: 10px 10px 0 0; background: #fff; }
.tab .favicon { stroke: none; }
.tab-title { flex: 1; margin-left: 11px; font-size: 15px; }
.new-tab { margin-left: 16px; }
.window-controls { display: flex; gap: 44px; margin-left: auto; padding-right: 22px; }
.window-controls svg { stroke: #8a8a8a; }
.toolbar { display: flex; align-items: center; height: 50px; padding: 0 17px 0 15px; }
.toolbar > button + button { margin-left: 25px; }
.address { flex: 1; display: flex; align-items: center; gap: 17px; height: 40px; margin: 0 15px 0 15px; padding: 0 9px 0 10px; border: 1px solid #ccc; border-radius: 20px; }
.address svg { stroke: #666; }
.url { flex: 1; margin-left: -6px; font-size: 16px; }
.url span { color: #666; }
.extensions { display: flex; align-items: center; justify-content: space-between; width: 205px; }
.ext-h { width: 21px; height: 20px; background: #666; color: #fff; font-size: 12px; font-weight: 700; line-height: 20px; text-align: center; }
.divider { width: 1px; height: 20px; background: #aaa; }
.profile { position: relative; height: 28px; }
.profile::after { content: ""; position: absolute; top: 0; right: -1px; width: 8px; height: 8px; border-radius: 50%; background: #e00000; }
.browser .dots { fill: #222; stroke: none; }

/* Application */
.app { flex: 1; display: flex; flex-direction: column; margin: 0 5px 6px 6px; padding-bottom: 4px; border-radius: 10px; overflow: hidden; background: #09366b; box-shadow: 0 0 2px #777; }
.header { position: relative; display: grid; grid-template-columns: 1fr auto 1fr; height: 65px; color: #fff; }
.header-bg { position: absolute; inset: 0; width: 100%; height: 100%; }
.header h1 { position: relative; font-size: 35px; line-height: 60px; }
.header-side { position: relative; display: flex; align-items: flex-start; padding: 8px 0 0 28px; }
.header svg { fill: none; }
.header button { height: 42px; }
.header button svg { stroke: #fff; stroke-width: 2; }
.logo { margin-right: 26px; }
.header-side > .icon-btn + .nav { margin-left: 28px; }
.nav { display: flex; gap: 2px; }
.nav a { display: flex; align-items: center; gap: 8px; height: 42px; padding: 4px 15px 0; border-bottom: 4px solid transparent; white-space: nowrap; }
.nav svg { width: 14px; height: 14px; stroke: #fff; stroke-width: 1.3; }
.nav .active { background: #4169dd; border-color: #fb5004; }
.header-right { justify-content: flex-end; gap: 20px; padding-right: 28px; }
.header-right .nav { gap: 1px; margin-right: -8px; }
.header .user { gap: 10px; }
.header .user svg { stroke-width: 1; }

.dashboard { display: grid; grid-template-columns: 570fr 757fr 568fr; grid-template-rows: minmax(0, 1fr); gap: 6px; height: calc(100vh - 176px); min-height: 760px; padding: 0 1px; }
.column { display: grid; gap: 6px; min-width: 0; min-height: 0; }
.column-left { grid-template-rows: minmax(0, 340fr) minmax(0, 508fr); }
.column-mid { grid-template-rows: minmax(0, 594fr) minmax(0, 254fr); }
.column-right { grid-template-rows: minmax(0, 255fr) minmax(0, 255fr) minmax(0, 332fr); }
.monitors { display: grid; grid-template: repeat(2, minmax(0, 1fr)) / repeat(2, minmax(0, 1fr)); gap: 6px; }
.panel { display: flex; flex-direction: column; min-width: 0; min-height: 0; border-radius: 4px; background: #041440; box-shadow: 0 0 4px #0a2a63; overflow: hidden; }
.panel-head { display: flex; justify-content: space-between; align-items: center; height: 34px; padding: 0 28px 0 18px; flex: none; }
.panel-head h2 { font-size: 19px; font-weight: 400; }
.refresh { gap: 9px; }
.refresh svg { width: 15px; height: 15px; fill: none; stroke: #e4eaf5; stroke-width: 1.3; }

.gauges { flex: 1; display: grid; grid-template-columns: repeat(3, 1fr); padding: 80px 12px 0 10px; }
.gauges figure { display: flex; flex-direction: column; align-items: center; gap: 14px; color: #7590b9; }
.gauges text { font-size: 18px; font-weight: 700; text-anchor: middle; }

/* Charts */
.chart { display: block; flex: 1; width: 100%; min-height: 0; }
.chart text { fill: #e4e7ef; }
.chart .title { font-size: 16px; font-weight: 700; text-anchor: middle; }
.grid { fill: none; stroke: #c3cadb; stroke-width: 1.5px; }
.grid.dull { stroke: #8f9ab6; stroke-width: 2px; }
.axis { fill: none; stroke: #6e7079; stroke-width: 1.5px; }
.ylab text, .xlab text { font-size: 11px; font-weight: 500; }
.ylab text, .cat text, .end text { text-anchor: end; }
.xlab text, .dim text, .val text { text-anchor: middle; }
.curve { fill: none; stroke: #409eff; stroke-width: 6px; }
.curve.green { stroke: #67c23a; }
.legend text { font-size: 13px; }
.chart .cat text { font-size: 13px; fill: #6e7079; }
.chart .dim text { font-size: 15px; fill: #6e7079; }
.chart .dim.end text { text-anchor: end; }
.chart .val text { font-size: 12px; font-weight: 700; fill: #333; stroke: #fff; stroke-width: 3px; paint-order: stroke; }
.chart .count text { font-size: 14px; font-weight: 700; fill: #ff4d5a; text-anchor: middle; }
.chart .scale text { font-size: 15px; }

/* Tables */
table { border-collapse: collapse; table-layout: fixed; }
th { text-align: left; }
th, td { padding: 0; white-space: nowrap; }
.storage { margin: 22px 11px 0; }
.storage th { height: 35px; color: #7590b9; border-bottom: 1px solid #0d2d6b; }
.storage td { height: 37px; border-bottom: 1px solid #fff; }
.storage tr:last-child td { border-bottom: 0; }
.storage th:nth-child(1) { width: 19%; }
.storage th:nth-child(2) { width: 31%; }
.storage th:nth-child(3) { width: 16%; }
.storage th:nth-child(4) { width: 15%; }
.storage .num { text-align: right; padding-right: 7px; }

.notices { flex: 1; display: flex; flex-direction: column; margin: 24px 11px 15px; min-height: 0; }
.notice-head { width: 100%; margin-bottom: 4px; }
.notice-head th { height: 31px; font-weight: 400; color: #7590b9; border-bottom: 1px solid #0d2d6b; }
.notice-head th:nth-child(-n+2) { width: 184px; }
.notice-scroll { flex: 1; display: flex; min-height: 0; }
.notice-view { flex: 1; display: flex; flex-direction: column; justify-content: flex-end; overflow: hidden; }
.notice-body { width: 100%; }
.notice-body td { height: 62px; padding-top: 6px; border-bottom: 1px solid #fff; }
.notice-body tr:last-child td { border-bottom: 0; }
.notice-body td:nth-child(1) { width: 178px; color: #7590b9; }
.notice-body td:nth-child(2) { width: 179px; }
.notice-body svg { width: 11px; height: 11px; margin-right: 4px; fill: none; stroke: #e4eaf5; stroke-width: 1.3; }
.notice-body .off { color: #f00; }
.notice-body .on { color: #008000; }
.scrollbar { display: flex; flex-direction: column; align-items: center; width: 19px; padding: 9px 0; background: #fcfcfc; }
.scrollbar .up, .scrollbar .down { border: 5px solid transparent; }
.scrollbar .up { border-bottom-color: #8a8a8a; border-top: 0; margin-bottom: auto; }
.scrollbar .down { border-top-color: #8a8a8a; border-bottom: 0; }
.scrollbar .thumb { width: 11px; height: 108px; margin-bottom: 8px; border-radius: 6px; background: #8a8a8a; }

.dev-badge { position: fixed; left: 30px; bottom: 30px; width: 46px; height: 46px; border: 1px solid #2c2f3c; border-radius: 50%; background: #02030c; }
```
